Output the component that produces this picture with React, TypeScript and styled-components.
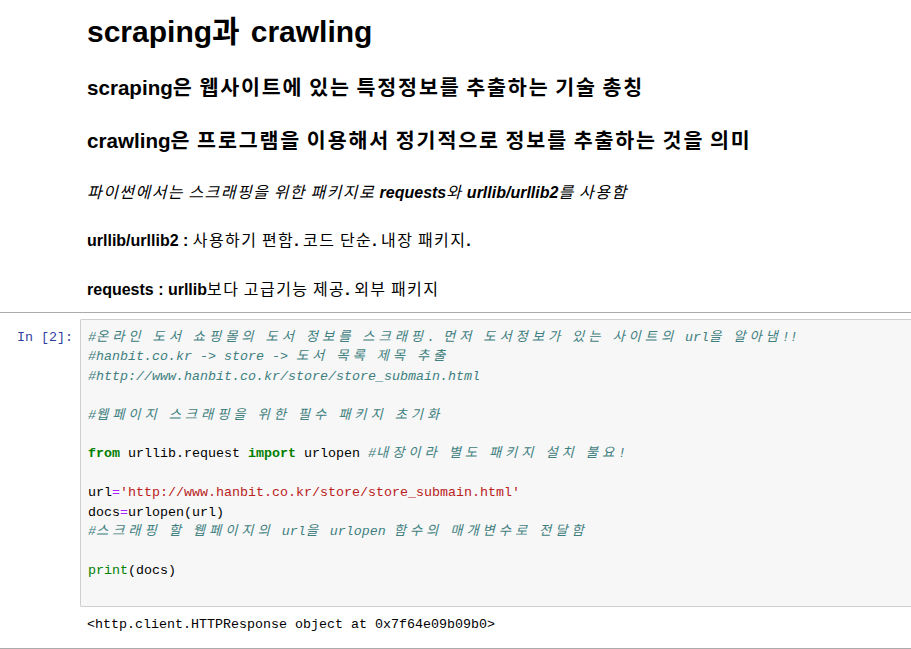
import React from 'react';
import styled, { createGlobalStyle } from 'styled-components';

const Global = createGlobalStyle`
  html, body { margin: 0; padding: 0; background: #fff; overflow: hidden; }
  #root { width: 911px; }
`;

const Notebook = styled.div`
  display: flex;
  flex-direction: column;
  width: 911px;
`;

const MarkdownCell = styled.div`
  display: flex;
  flex-direction: column;
  padding: 13px 0 10px 87px;
  font-family: "Liberation Sans", "Noto Sans CJK KR", sans-serif;
  color: #000;
`;

const H1 = styled.h1`
  margin: 0;
  height: 38px;
  font-size: 30px;
  line-height: 38px;
  font-weight: 700;
  white-space: nowrap;
`;

const H2 = styled.h2<{ $gap: number }>`
  margin: ${(p) => p.$gap}px 0 0;
  height: 30px;
  font-size: 20.6px;
  line-height: 30px;
  font-weight: 700;
  white-space: nowrap;
`;

const H4 = styled.h4<{ $gap: number; $italic?: boolean }>`
  margin: ${(p) => p.$gap}px 0 0;
  height: 24px;
  font-size: 16px;
  line-height: 24px;
  font-weight: 700;
  font-style: ${(p) => (p.$italic ? 'italic' : 'normal')};
  white-space: nowrap;
`;

const KrBold = styled.span`
  font-family: "Noto Sans CJK KR", sans-serif;
  letter-spacing: 0.09em;
  line-height: 1;
`;

const KrPlain = styled(KrBold)`
  font-weight: 400;
`;

const CodeCell = styled.div`
  display: flex;
  flex-direction: column;
  border-top: 1px solid #ababab;
  border-bottom: 1px solid #ababab;
  padding: 6px 0 14px;
`;

const Row = styled.div`
  display: grid;
  grid-template-columns: 80px 1fr;
`;

const Prompt = styled.div`
  font-family: "Liberation Mono", monospace;
  font-size: 13.33px;
  line-height: 19.42px;
  color: #303f9f;
  text-align: right;
  padding: 9px 7px 0 0;
  white-space: pre;
`;

const InputArea = styled.div`
  background: #f7f7f7;
  border: 1px solid #cfcfcf;
  border-right: none;
  border-radius: 2px 0 0 2px;
  padding: 8px 0 6px 7px;
  font-family: "Liberation Mono", "Noto Sans CJK KR", monospace;
  font-size: 13.33px;
  line-height: 19.42px;
  color: #000;
`;

const CodeLine = styled.div`
  height: 19.42px;
  white-space: pre;
`;

type Kind = 'c' | 'k' | 'b' | 's' | 'o' | 'n';

const colors: Record<Kind, string> = {
  c: '#408080',
  k: '#008000',
  b: '#008000',
  s: '#ba2121',
  o: '#aa22ff',
  n: '#000000',
};

const Tok = styled.span<{ $kind: Kind }>`
  color: ${(p) => colors[p.$kind]};
  font-style: ${(p) => (p.$kind === 'c' ? 'italic' : 'normal')};
  font-weight: ${(p) => (p.$kind === 'k' ? 700 : 400)};
`;

const Hg = styled.span`
  font-family: "Noto Sans CJK KR", sans-serif;
  letter-spacing: 3.9px;
  line-height: 1;
`;

const OutputText = styled.div`
  grid-column: 2;
  padding: 8px 0 0 7px;
  font-family: "Liberation Mono", monospace;
  font-size: 13.33px;
  line-height: 19.42px;
  color: #000;
  white-space: pre;
`;

const HANGUL = /([\u1100-\u11FF\u3130-\u318F\uAC00-\uD7AF]+)/;

function splitKr(text: string, Wrap: React.ComponentType<{ children?: React.ReactNode }>) {
  return text.split(HANGUL).map((part, i) =>
    part && HANGUL.test(part) ? <Wrap key={i}>{part}</Wrap> : <React.Fragment key={i}>{part}</React.Fragment>
  );
}

const code: [Kind, string][][] = [
  [['c', '#온라인 도서 쇼핑몰의 도서 정보를 스크래핑. 먼저 도서정보가 있는 사이트의 url을 알아냄!!']],
  [['c', '#hanbit.co.kr -> store -> 도서 목록 제목 추출']],
  [['c', '#http://www.hanbit.co.kr/store/store_submain.html']],
  [],
  [['c', '#웹페이지 스크래핑을 위한 필수 패키지 초기화']],
  [],
  [['k', 'from'], ['n', ' urllib.request '], ['k', 'import'], ['n', ' urlopen '], ['c', '#내장이라 별도 패키지 설치 불요!']],
  [],
  [['n', 'url'], ['o', '='], ['s', "'http://www.hanbit.co.kr/store/store_submain.html'"]],
  [['n', 'docs'], ['o', '='], ['n', 'urlopen(url)']],
  [['c', '#스크래핑 할 웹페이지의 url을 urlopen 함수의 매개변수로 전달함']],
  [],
  [['b', 'print'], ['n', '(docs)']],
  [],
];

export default function App() {
  return (
    <>
      <Global />
      <Notebook>
        <MarkdownCell>
          <H1>{splitKr('scraping과 crawling', KrBold)}</H1>
          <H2 $gap={22}>{splitKr('scraping은 웹사이트에 있는 특정정보를 추출하는 기술 총칭', KrBold)}</H2>
          <H2 $gap={23}>{splitKr('crawling은 프로그램을 이용해서 정기적으로 정보를 추출하는 것을 의미', KrBold)}</H2>
          <H4 $gap={25} $italic>
            {splitKr('파이썬에서는 스크래핑을 위한 패키지로 requests와 urllib/urllib2를 사용함', KrPlain)}
          </H4>
          <H4 $gap={24}>{splitKr('urllib/urllib2 : 사용하기 편함. 코드 단순. 내장 패키지.', KrPlain)}</H4>
          <H4 $gap={25}>{splitKr('requests : urllib보다 고급기능 제공. 외부 패키지', KrPlain)}</H4>
        </MarkdownCell>
        <CodeCell>
          <Row>
            <Prompt>In [2]:</Prompt>
            <InputArea>
              {code.map((line, i) => (
                <CodeLine key={i}>
                  {line.map(([kind, text], j) => (
                    <Tok key={j} $kind={kind}>
                      {splitKr(text, Hg)}
                    </Tok>
                  ))}
                </CodeLine>
              ))}
            </InputArea>
          </Row>
          <Row>
            <OutputText>{'<http.client.HTTPResponse object at 0x7f64e09b09b0>'}</OutputText>
          </Row>
        </CodeCell>
      </Notebook>
    </>
  );
}
